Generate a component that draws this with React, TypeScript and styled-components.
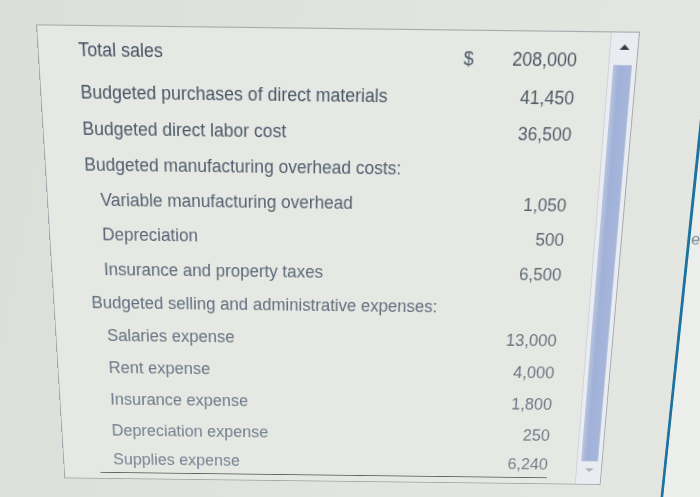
import styled, {createGlobalStyle} from "styled-components";

const GlobalStyle = createGlobalStyle`
	html, body {
		margin: 0;
		padding: 0;
		background: #dfe1dc;
		overflow: hidden;
	}
	body {
		font-family: "Liberation Sans", Arial, sans-serif;
	}
`

interface IBudgetRow {
	label: string
	level: number
	value?: string
	dollar?: boolean
	first?: boolean
	underline?: boolean
}

const rows: IBudgetRow[] = [
	{label: "Total sales", level: 0, dollar: true, value: "208,000", first: true},
	{label: "Budgeted purchases of direct materials", level: 0, value: "41,450"},
	{label: "Budgeted direct labor cost", level: 0, value: "36,500"},
	{label: "Budgeted manufacturing overhead costs:", level: 0},
	{label: "Variable manufacturing overhead", level: 1, value: "1,050"},
	{label: "Depreciation", level: 1, value: "500"},
	{label: "Insurance and property taxes", level: 1, value: "6,500"},
	{label: "Budgeted selling and administrative expenses:", level: 0},
	{label: "Salaries expense", level: 1, value: "13,000"},
	{label: "Rent expense", level: 1, value: "4,000"},
	{label: "Insurance expense", level: 1, value: "1,800"},
	{label: "Depreciation expense", level: 1, value: "250"},
	{label: "Supplies expense", level: 1, value: "6,240", underline: true},
]

// the photo gets paler towards the bottom of the screen
const tone = (fade: number, from: number[], to: number[]) => {
	const c = from.map((v, i) => Math.round(v + (to[i] - v) * fade))
	return `rgb(${c[0]}, ${c[1]}, ${c[2]})`
}

const Scene = styled.div`
	width: 700px;
	height: 497px;
	overflow: hidden;
	background: linear-gradient(100deg, #dcdfd9 0%, #e2e4df 60%, #e4e6e1 100%);
`
// the screen was photographed at an angle: tilt the flat page the same way
const Stage = styled.div`
	display: flex;
	align-items: flex-start;
	margin: 28px 0 0 36px;
	transform-origin: 302px 0;
	transform: perspective(1390px) rotate(0.7deg) rotateX(-19deg) scaleY(1.15);
`
const Panel = styled.div`
	display: flex;
	flex-shrink: 0;
	width: 604px;
	height: 470px;
	box-sizing: border-box;
	border: 1px solid #a3a9ad;
	border-width: 0.9px 1px;
	background: #e6e8e3;
`
const Table = styled.div`
	flex: 1;
	padding-top: 4.3px;
`
const Row = styled.div<{$first?: boolean, $underline?: boolean}>`
	display: grid;
	grid-template-columns: 1fr 40px 86px;
	align-items: center;
	height: ${p => p.$first ? 40.6 : p.$underline ? 29.6 : 35.13}px;
	margin: 0 32px 0 40px;
	border-bottom: ${p => p.$underline ? "1.3px solid #5d6266" : "none"};
	font-size: 18px;
`
const Label = styled.div<{$level: number, $fade: number, $first?: boolean}>`
	padding-left: ${p => p.$level * 15}px;
	padding-bottom: ${p => p.$first ? 5.2 : 0}px;
	color: ${p => tone(p.$fade, [68, 81, 98], [118, 131, 146])};
	white-space: nowrap;
`
const Dollar = styled.div<{$fade: number, $first?: boolean}>`
	padding-left: 12px;
	padding-top: ${p => p.$first ? 4.3 : 0}px;
	color: ${p => tone(p.$fade, [74, 88, 104], [122, 134, 146])};
`
const Value = styled.div<{$fade: number, $first?: boolean}>`
	text-align: right;
	padding-top: ${p => p.$first ? 4.3 : 0}px;
	color: ${p => tone(p.$fade, [78, 88, 100], [118, 128, 140])};
`
const Scrollbar = styled.div`
	display: flex;
	flex-direction: column;
	align-items: center;
	flex-shrink: 0;
	width: 27px;
	border-left: 1px solid #cdd3da;
	background: #e9ecf0;
`
const ArrowCell = styled.div<{$top?: boolean}>`
	display: flex;
	align-items: center;
	justify-content: center;
	height: ${p => p.$top ? 20.9 : 19.1}px;
	margin-top: ${p => p.$top ? 3.5 : 0}px;
`
const Arrow = styled.div<{$up?: boolean}>`
	width: 0;
	height: 0;
	border-left: 5px solid transparent;
	border-right: 5px solid transparent;
	${p => p.$up
		? "border-bottom: 5.2px solid #343a42;"
		: "border-top: 4.4px solid #aab1bb;"}
`
const Thumb = styled.div`
	width: 19px;
	height: 412px;
	margin-top: 6.1px;
	box-sizing: border-box;
	border: 1px solid #b9c4dc;
	background: linear-gradient(90deg, #b5c1de 0%, #a0b1d8 30%, #a6b5da 100%);
`
const SideWindow = styled.div`
	flex-shrink: 0;
	width: 220px;
	height: 610px;
	margin: -52px 0 0 69px;
	padding: 243px 0 0 1px;
	box-sizing: border-box;
	border-left: 3px solid #1d72a0;
	background: #eceeeb;
	font-size: 17px;
	color: #7a8796;
`

export default function App() {
	const last = rows.length - 1

	return (
		<Scene>
			<GlobalStyle/>
			<Stage>
				<Panel>
					<Table>
						{rows.map((row, i) => {
							const fade = i / last
							return (
								<Row key={row.label} $first={row.first} $underline={row.underline}>
									<Label $level={row.level} $fade={fade} $first={row.first}>{row.label}</Label>
									<Dollar $fade={fade} $first={row.first}>{row.dollar ? "$" : ""}</Dollar>
									<Value $fade={fade} $first={row.first}>{row.value ?? ""}</Value>
								</Row>
							)
						})}
					</Table>
					<Scrollbar>
						<ArrowCell $top><Arrow $up/></ArrowCell>
						<Thumb/>
						<ArrowCell><Arrow/></ArrowCell>
					</Scrollbar>
				</Panel>
				<SideWindow>e</SideWindow>
			</Stage>
		</Scene>
	)
}
